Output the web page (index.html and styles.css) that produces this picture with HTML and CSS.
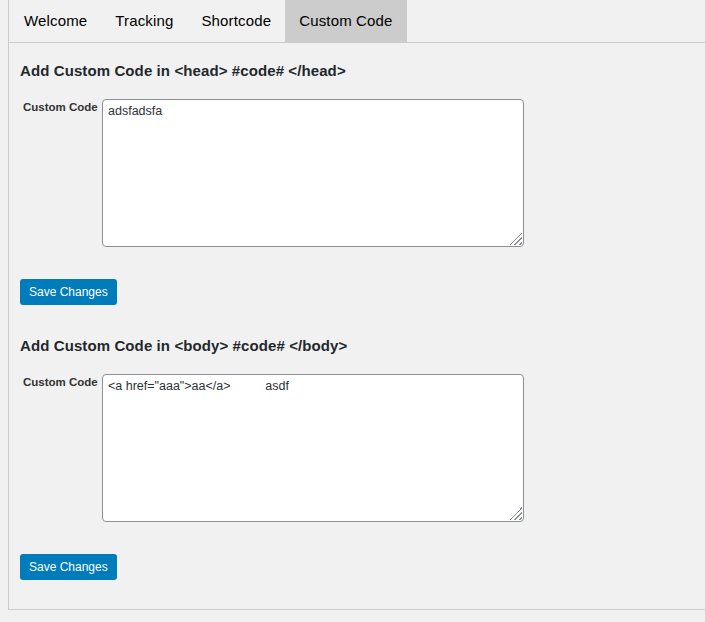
FILE: index.html
```html
<!DOCTYPE html>
<html>
<head>
<meta charset="utf-8">
<link rel="stylesheet" href="styles.css">
</head>
<body>
<div class="wrap">
  <nav class="tabs">
    <a class="tab">Welcome</a>
    <a class="tab">Tracking</a>
    <a class="tab">Shortcode</a>
    <a class="tab active">Custom Code</a>
  </nav>
  <div class="content">
    <h2 class="title">Add Custom Code in &lt;head&gt; #code# &lt;/head&gt;</h2>
    <div class="row">
      <label class="label">Custom Code</label>
      <div class="field"><textarea class="code">adsfadsfa</textarea></div>
    </div>
    <button class="btn">Save Changes</button>

    <h2 class="title">Add Custom Code in &lt;body&gt; #code# &lt;/body&gt;</h2>
    <div class="row">
      <label class="label">Custom Code</label>
      <div class="field"><textarea class="code">&lt;a href="aaa"&gt;aa&lt;/a&gt;          asdf</textarea></div>
    </div>
    <button class="btn">Save Changes</button>
  </div>
</div>
</body>
</html>
```
FILE: styles.css
```css
html, body {
  margin: 0;
  padding: 0;
  background: #f1f1f1;
}
body {
  font-family: "Liberation Sans", Arial, sans-serif;
  color: #23282d;
}
.wrap {
  margin-left: 8px;
  border-left: 1px solid #cccccc;
  border-bottom: 1px solid #cccccc;
}
.tabs {
  display: flex;
  height: 42px;
  border-bottom: 1px solid #cccccc;
  padding-left: 1px;
}
.tab {
  display: flex;
  align-items: center;
  padding: 0 14px 1px 14px;
  font-size: 15px;
  letter-spacing: 0.15px;
  color: #000;
  cursor: pointer;
}
.tab.active {
  background: #cccccc;
}
.content {
  padding: 19px 11px 29px 11px;
  display: flex;
  flex-direction: column;
  align-items: flex-start;
}
.title {
  margin: 0 0 19px 0;
  font-size: 15px;
  letter-spacing: 0.1px;
  line-height: 18px;
  font-weight: bold;
  color: #23282d;
}
.row {
  display: flex;
  align-items: flex-start;
}
.label {
  width: 79px;
  padding: 1px 0 0 3px;
  font-size: 11.5px;
  font-weight: bold;
  color: #333;
  line-height: 14px;
}
.field {
  position: relative;
  display: flex;
}
.field::after {
  content: "";
  position: absolute;
  right: 2px;
  bottom: 2px;
  width: 13px;
  height: 13px;
  pointer-events: none;
  background:
    linear-gradient(135deg, #fff 50%, transparent 50%),
    repeating-linear-gradient(135deg, #fff 0 2px, #8a8d91 2px 3.4px);
}
.code {
  box-sizing: border-box;
  width: 422px;
  height: 148px;
  margin: 0;
  padding: 3px 5px;
  border: 1px solid #8c8f94;
  border-radius: 4px;
  background: #fff;
  font-family: "Liberation Sans", Arial, sans-serif;
  font-size: 12.5px;
  line-height: 16px;
  color: #2c3338;
  resize: none;
}
.btn {
  margin: 32px 0 32px 0;
  height: 26px;
  padding: 0 9px;
  border: none;
  border-radius: 3px;
  background: #007cba;
  color: #fff;
  font-family: "Liberation Sans", Arial, sans-serif;
  font-size: 12px;
  cursor: pointer;
}
.btn:last-child {
  margin-bottom: 0;
}
```
